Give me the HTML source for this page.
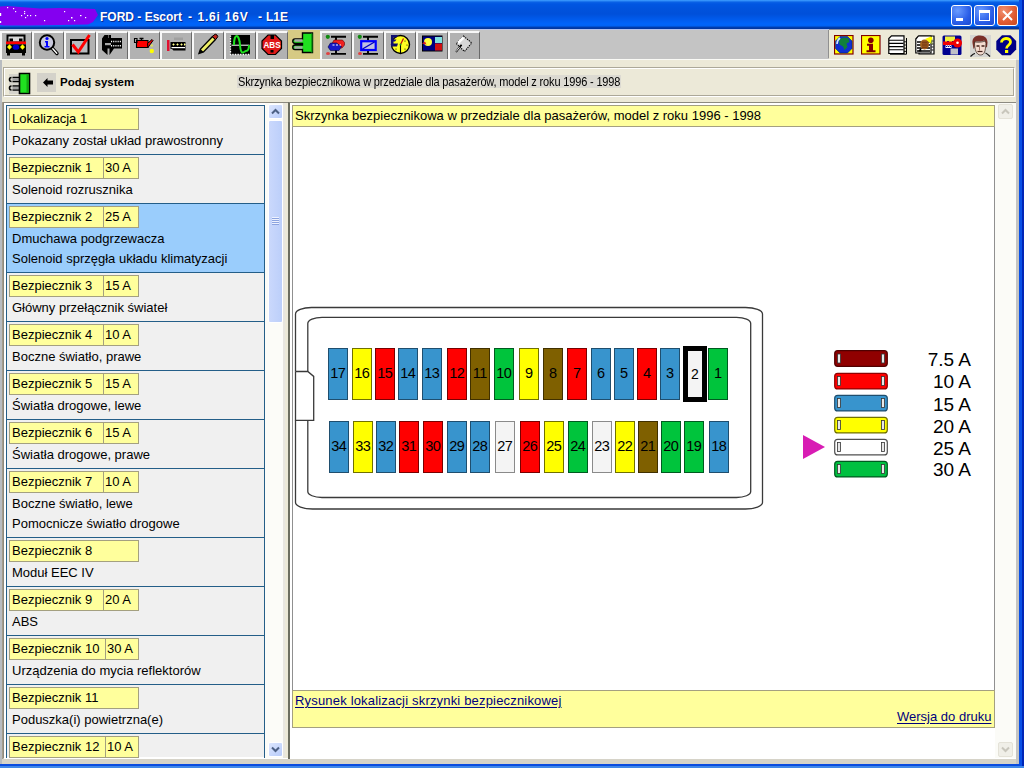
<!DOCTYPE html>
<html><head><meta charset="utf-8">
<style>
*{box-sizing:border-box}
html,body{margin:0;padding:0}
body{width:1024px;height:768px;position:relative;overflow:hidden;background:#ece9d8;font-family:"Liberation Sans",sans-serif;color:#000}
.a{position:absolute}
#title{left:0;top:0;width:1024px;height:29px;background:linear-gradient(#3d9cff 0px,#2a88f6 1px,#0a62e6 2px,#0056e2 4px,#0052dc 9px,#0050da 14px,#0058e8 18px,#0064fa 24px,#0062f2 26px,#0042ba 27px,#0036a0 28px)}
.tb{top:31px;width:32px;height:28px;background:#b2b2b2;border-top:2px solid #f8f8f8;border-left:2px solid #f8f8f8;border-right:1px solid #6a6a6a}
.row{position:absolute;left:7px;width:257px;background:#efeff1;border-top:1px solid #1a5c7e}
.yb{height:22px;background:#ffff9c;border:1px solid #a4a080}
.d{position:absolute;left:5px;font-size:13px;white-space:nowrap}
.tt{top:10px;font-size:12px;line-height:14px;font-weight:bold;color:#fff;text-shadow:1px 1px 0 #0a2a90;white-space:pre}
.t{font-size:13px;line-height:15px;white-space:nowrap}
.lk{color:#00007e;text-decoration:underline;text-underline-offset:1.5px}
.lg{right:53px;font-size:19px;line-height:22px;white-space:nowrap}
.fz{position:absolute;border:1px solid #2a4050;font-size:14.5px;text-align:center;line-height:49px;width:20px;height:52px;letter-spacing:-0.6px;text-indent:-0.6px}
</style></head><body>
<!-- title bar -->
<div id="title" class="a"></div>
<svg class="a" style="left:0;top:0" width="100" height="29"><path d="M0 6.5L8 6L20 7L40 8.5L60 8L80 8.5L95 9L98 15L93 22L88 24.5L60 25L30 25.5L4 25.5L0 25Z" fill="#8400f0" style="filter:blur(0.5px)"/>
<g fill="#fff"><rect x="7" y="7" width="1.2" height="1.2"/><rect x="13" y="8" width="1.2" height="1.2"/><rect x="15" y="11" width="1.2" height="1.2"/><rect x="24" y="11" width="1.2" height="1.2"/><rect x="24" y="13" width="1.2" height="1.2"/><rect x="21" y="15" width="1.2" height="1.2"/><rect x="27" y="15" width="1.2" height="1.2"/><rect x="30" y="15" width="1.2" height="1.2"/><rect x="35" y="15" width="1.2" height="1.2"/><rect x="25" y="17" width="1.2" height="1.2"/><rect x="44" y="20" width="1.2" height="1.2"/><rect x="64" y="11" width="1.2" height="1.2"/><rect x="71" y="17" width="1.5" height="1.5"/><rect x="68" y="20" width="1.2" height="1.2"/><rect x="74" y="20" width="1.2" height="1.2"/><rect x="80" y="15" width="1.5" height="1.2"/><rect x="85" y="17" width="1.2" height="1.2"/><rect x="0" y="13" width="1.2" height="3"/><rect x="0" y="21" width="1.2" height="2"/></g></svg>
<div class="a tt" style="left:100px">FORD - Escort</div>
<div class="a tt" style="left:188px">-</div>
<div class="a tt" style="left:197.5px;letter-spacing:0.8px">1.6i 16V</div>
<div class="a tt" style="left:258px">-</div>
<div class="a tt" style="left:266px">L1E</div>
<!-- title buttons -->
<div class="a" style="left:951px;top:5px;width:21px;height:21px;border:1px solid #fff;border-radius:3px;background:radial-gradient(circle at 30% 25%,#6a9cff,#2a5ee8 60%,#1a48d0)"><div class="a" style="left:4px;top:12px;width:7px;height:3px;background:#fff"></div></div>
<div class="a" style="left:974px;top:5px;width:21px;height:21px;border:1px solid #fff;border-radius:3px;background:radial-gradient(circle at 30% 25%,#6a9cff,#2a5ee8 60%,#1a48d0)"><div class="a" style="left:4px;top:4px;width:11px;height:11px;border:1px solid #fff;border-top-width:3px"></div></div>
<div class="a" style="left:997px;top:5px;width:21px;height:21px;border:1px solid #fff;border-radius:3px;background:radial-gradient(circle at 30% 25%,#f09070,#e05a30 60%,#c84a20)"><svg class="a" style="left:4px;top:4px" width="11" height="11"><path d="M1 1L10 10M10 1L1 10" stroke="#fff" stroke-width="2"/></svg></div>

<!-- window frame -->
<div class="a" style="left:1019px;top:0;width:3px;height:768px;background:#0a50e6"></div>
<div class="a" style="left:1022px;top:0;width:2px;height:768px;background:#0026b8"></div>
<div class="a" style="left:0;top:764px;width:1020px;height:2px;background:#0a4ce0"></div>
<div class="a" style="left:0;top:766px;width:1024px;height:2px;background:#4088e8"></div>
<div class="a" style="left:0;top:29px;width:2px;height:735px;background:#b8bcc0"></div>
<div class="a" style="left:1016px;top:60px;width:3px;height:704px;background:#c4c4c4"></div>
<div class="a" style="left:2px;top:759px;width:1014px;height:5px;background:#d6d3c8"></div>
<div class="a" style="left:0;top:29px;width:829px;height:1px;background:#b4c2ec"></div><div class="a" style="left:829px;top:29px;width:190px;height:1px;background:#8a8c94"></div>

<!-- toolbar 1 -->
<div class="a" style="left:0;top:30px;width:829px;height:29px;background:#c4c4c4"></div>
<div class="a" style="left:828px;top:30px;width:1px;height:28px;background:#909090"></div>
<div class="a tb" style="left:0px"></div>
<svg class="a" style="left:0px;top:31px" width="32" height="28">
<rect x="7.5" y="4.5" width="17" height="7" fill="#d8d8d8" stroke="#000" stroke-width="2"/>
<rect x="9.5" y="7.5" width="3.5" height="3" fill="#000"/><rect x="19" y="7.5" width="3.5" height="3" fill="#000"/>
<rect x="6" y="10.5" width="20" height="2.8" fill="#f00"/>
<rect x="6" y="13.3" width="20" height="8.7" fill="#000"/>
<path d="M9.5 13.3L12 16L9.5 18.7L7 16z" fill="#ff0"/><path d="M22.5 13.3L25 16L22.5 18.7L20 16z" fill="#ff0"/>
<ellipse cx="16" cy="16.2" rx="3.2" ry="2.6" fill="#0000d0"/>
<rect x="7" y="22" width="3" height="2.5" fill="#000"/><rect x="22" y="22" width="3" height="2.5" fill="#000"/>
</svg>
<div class="a tb" style="left:32px"></div>
<svg class="a" style="left:32px;top:31px" width="32" height="28">
<circle cx="15" cy="11.5" r="7.2" fill="#c8c8dc" stroke="#000" stroke-width="2"/>
<circle cx="15" cy="7.5" r="1.6" fill="#00f"/><path d="M13 10h3v5h1.5v1.5h-5V15h1.5v-3.5h-1z" fill="#00f"/>
<path d="M20.5 17.5l4.5 5" stroke="#000" stroke-width="3.4" stroke-linecap="round"/>
<path d="M20.8 17.8l4 4.5" stroke="#fff" stroke-width="1.4" stroke-linecap="round"/>
</svg>
<div class="a tb" style="left:64px"></div>
<svg class="a" style="left:64px;top:31px" width="32" height="28">
<rect x="7" y="9" width="17.5" height="13.5" fill="#b8bcc0" stroke="#000" stroke-width="2"/>
<path d="M8.5 13.5l5.8 7.5L25.5 4" fill="none" stroke="#f00" stroke-width="3"/>
</svg>
<div class="a tb" style="left:96px"></div>
<svg class="a" style="left:96px;top:31px" width="32" height="28">
<path d="M8.5 4H12V7H26V17.5H18L13.5 24V17.5H11.5V24L6 19V7.5z" fill="#000"/>
<rect x="12.5" y="4" width="2.5" height="3" fill="#000"/>
<rect x="9" y="12" width="6" height="2.2" fill="#a8a8a8"/>
<path d="M15 10.5h11M15 14.8h11" stroke="#fff" stroke-width="1.4" stroke-dasharray="1.1 1.1"/>
</svg>
<div class="a tb" style="left:128px"></div>
<svg class="a" style="left:128px;top:31px" width="32" height="28">
<path d="M8.5 9.5h11.5v7H8.5z" fill="#f00" stroke="#000" stroke-width="1.1"/>
<path d="M19.5 12.5l4.5-4 1 1-5 7z" fill="#f00" stroke="#000" stroke-width="1"/>
<path d="M6.5 7.5h2.5v4H6.5z" fill="none" stroke="#000" stroke-width="1.1"/>
<path d="M11.5 7.5h4M13.5 7.5v2" stroke="#000" stroke-width="1.3"/>
<circle cx="23.8" cy="14.5" r="1.3" fill="#dde060"/><circle cx="23.8" cy="20" r="2.2" fill="#ff0"/>
</svg>
<div class="a tb" style="left:160px"></div>
<svg class="a" style="left:160px;top:31px" width="32" height="28">
<rect x="7" y="9" width="2.5" height="11" fill="#e01030"/>
<path d="M10.5 11h15v8.5h-12l-1.5-1.5h-1.5z" fill="#000"/>
<path d="M12.5 13.5h2M13.5 12.5v2M16.5 13.5h2M17.5 12.5v2M20.5 13.5h2M21.5 12.5v2M24 13.5h1.5M24.5 12.5v2" stroke="#ff8" stroke-width="1.1"/>
<rect x="11.5" y="16" width="13.5" height="1.2" fill="#fff"/>
<rect x="14" y="6.5" width="9" height="2.5" fill="#a0a0a0"/>
</svg>
<div class="a tb" style="left:192px"></div>
<svg class="a" style="left:192px;top:31px" width="32" height="28">
<path d="M7 22.5l1.5-4.5 12-12.5 3 3-12 12.5z" fill="#ee6" stroke="#000" stroke-width="1.4"/>
<path d="M20.5 5.5l1.5-1.5a2 2 0 0 1 3 3l-1.5 1.5z" fill="#c02018" stroke="#000" stroke-width="1"/>
<path d="M7 22.5l1.5-4.5 3 3z" fill="#000"/>
</svg>
<div class="a tb" style="left:224px"></div>
<svg class="a" style="left:224px;top:31px" width="32" height="28">
<rect x="6.5" y="4" width="19.5" height="19.5" fill="#000"/>
<path d="M6.5 4.5v19h19.5" fill="none" stroke="#fff" stroke-width="1.3" stroke-dasharray="1.3 1.3"/>
<path d="M7.5 14.2h18" stroke="#fff" stroke-width="1"/>
<path d="M10 14c0-12 5-12 6 0s4 6 6 6 3-3 3-6" fill="none" stroke="#1ee01e" stroke-width="2"/>
</svg>
<div class="a tb" style="left:256px"></div>
<svg class="a" style="left:256px;top:31px" width="32" height="28">
<path d="M12 4h7.5l6 6v7.5l-6 6H12l-6-6V10z" fill="#e01818" stroke="#000" stroke-width="1.2"/>
<rect x="14.5" y="4" width="3.5" height="4" fill="#000"/><rect x="14.5" y="19" width="3" height="2.5" fill="#000"/>
<text x="16" y="16.8" font-family="Liberation Sans" font-weight="bold" font-size="8.8" fill="#fff" text-anchor="middle" textLength="17" lengthAdjust="spacingAndGlyphs">ABS</text>
</svg>
<div class="a" style="left:288px;top:30px;width:32px;height:30px;background:#d6ca84"></div>
<svg class="a" style="left:288px;top:31px" width="32" height="28">
<path d="M14.5 2h10v19.5h-10V18.5H7a1.5 1.5 0 0 1 0-4.5h7.5v-1.5H7a1.5 1.5 0 0 1 0-4.5h7.5z" fill="#20e020" stroke="#000" stroke-width="1.4"/>
<path d="M6.5 9.5h8M6.5 16.5h8" stroke="#a8a8a8" stroke-width="2.5"/>
<rect x="23" y="2.5" width="1.5" height="19" fill="#10a010"/>
</svg>
<div class="a tb" style="left:320px"></div>
<svg class="a" style="left:320px;top:31px" width="32" height="28">
<circle cx="7.8" cy="5.8" r="2.1" fill="#108a10"/>
<path d="M11 5.7h15M16 5.7v3.5M11 22.9h15M16 19v4" stroke="#000" stroke-width="1.9"/>
<path d="M11.5 13.5L14 9H22.5L24.5 11.5V14L22 17H14z" fill="#f02020" stroke="#600" stroke-width="0.6"/>
<path d="M8 16L10.5 12H16.5L21.5 15.5L19 19.5H10.5z" fill="#1818c8" stroke="#000040" stroke-width="0.6"/>
<path d="M12.5 14h2M16 14h2M19.5 14h1.5" stroke="#fff" stroke-width="1"/>
<ellipse cx="8" cy="22.5" rx="2" ry="1.5" fill="#e04040"/>
</svg>
<div class="a tb" style="left:352px"></div>
<svg class="a" style="left:352px;top:31px" width="32" height="28">
<circle cx="7.8" cy="5.8" r="2.1" fill="#108a10"/>
<path d="M11 5.7h15M16 5.7v3.5M11 22.9h15M16 19.5v3.5" stroke="#000" stroke-width="1.9"/>
<rect x="9.2" y="10.2" width="14.5" height="8.8" fill="#c0c0e0" stroke="#0000ff" stroke-width="2.2"/>
<path d="M10.5 18L22.5 11" stroke="#0000c0" stroke-width="1.4"/>
<ellipse cx="8" cy="22.5" rx="2" ry="1.5" fill="#e04040"/>
</svg>
<div class="a tb" style="left:384px"></div>
<svg class="a" style="left:384px;top:31px" width="32" height="28">
<circle cx="16.5" cy="13.5" r="9" fill="#ffff20" stroke="#000" stroke-width="1.4"/>
<path d="M7 4h7l-1.5 2.5H9.5v2h3L11 10.5H9.5v2h4.5l-1 3H7z" fill="#101070"/>
<path d="M16.5 13.5l3-6" stroke="#c01010" stroke-width="1.3"/>
<path d="M16.5 13.5v9" stroke="#000" stroke-width="1.1"/>
<circle cx="16.5" cy="13.5" r="1" fill="#20a020"/>
<g fill="#000"><circle cx="21" cy="10" r="0.6"/><circle cx="23" cy="14" r="0.6"/><circle cx="21" cy="18" r="0.6"/><circle cx="12" cy="18" r="0.6"/><circle cx="11" cy="14" r="0.6"/></g>
</svg>
<div class="a tb" style="left:416px"></div>
<svg class="a" style="left:416px;top:31px" width="32" height="28">
<rect x="6.5" y="5" width="19.5" height="15" fill="#000080" stroke="#000" stroke-width="1"/>
<rect x="19" y="6" width="7" height="6" fill="#80e0e0"/>
<rect x="19" y="12.5" width="7" height="7" fill="#d01010"/>
<circle cx="12" cy="11" r="4" fill="#ffff40"/><path d="M6 12.5l3-2 1.5 3z" fill="#e02020"/>
</svg>
<div class="a tb" style="left:448px"></div>
<svg class="a" style="left:448px;top:31px" width="32" height="28">
<path d="M15.5 5l8.3 7-7.3 8.5-8.2-8z" fill="#d8d8d8" stroke="#000" stroke-width="1.1" stroke-dasharray="1.3 1"/>
<path d="M10 12l5.5-5.5" stroke="#fff" stroke-width="2.5"/>
<circle cx="13" cy="14.5" r="1.1" fill="#000"/>
<path d="M12.5 15l-4.5 6" stroke="#000" stroke-width="1.8"/>
<path d="M11.5 16.2l-3.5 4.5" stroke="#fff" stroke-width="0.9"/>
</svg>
<div class="a" style="left:829px;top:30px;width:190px;height:29px;background:#ece9d8"></div>
<svg class="a" style="left:834px;top:35px" width="21" height="22">
<rect x="0.5" y="0.5" width="18.5" height="18.5" fill="#ffff00" stroke="#800000" stroke-width="1.2"/>
<path d="M6 1.5h7.5l4.5 4.5v7.5l-4.5 4.5H6l-4.5-4.5V6z" fill="#1030d0" stroke="#002080" stroke-width="0.6"/>
<path d="M5 5c2-2.5 6-3.5 9.5-1.5l1 3.5-3 1.5 1 3.5-3 3-1.5-3.5-3.5-2z" fill="#10803a"/>
<path d="M3 9c0-2.5 1-4.5 3-6" stroke="#d0e8ff" stroke-width="1.6" fill="none"/>
</svg>
<svg class="a" style="left:861px;top:35px" width="21" height="22">
<rect x="0.5" y="0.5" width="18.5" height="18.5" fill="#ffff00" stroke="#800000" stroke-width="1.2"/>
<circle cx="9.8" cy="5.2" r="2.8" fill="#800000"/>
<path d="M6 8.8h6v6.5h2.5v2H5.5v-2H8v-4.5H6z" fill="#800000"/>
</svg>
<svg class="a" style="left:888px;top:35px" width="21" height="22">
<path d="M3.5 0.8H16V18.5H0.8V3.5z" fill="#fff" stroke="#000" stroke-width="1.2"/>
<path d="M2 19.2H18.5V3" fill="none" stroke="#000" stroke-width="1"/>
<path d="M1 5.2h14.5M1 8.4h14.5M1 11.6h14.5M1 14.8h14.5" stroke="#000" stroke-width="1.1"/>
<path d="M16 6.8h2.5M16 10h2.5M16 13.2h2.5M16 16.4h2.5" stroke="#000" stroke-width="0.9"/>
</svg>
<svg class="a" style="left:915px;top:35px" width="21" height="22">
<path d="M4 1h15v18H4z" fill="#fff" stroke="#000" stroke-width="1.2"/>
<path d="M0.8 4l2.5-3H16v17H0.8z" fill="#fff" stroke="#000" stroke-width="1.2"/>
<path d="M2 7h13M2 10h13M2 13h13M2 16h13" stroke="#000" stroke-width="1.3"/>
<path d="M16.5 6h2M16.5 9h2M16.5 12h2M16.5 15h2" stroke="#000" stroke-width="1"/>
<path d="M10 4l6-2.5 1.5 1.5-2 5.5z" fill="#ffff00"/>
<path d="M15.5 8.5l2-5v6z" fill="#809040"/>
<ellipse cx="9.5" cy="9.5" rx="4.5" ry="5" fill="#a06020"/>
<path d="M7 7.5h5M7 10h5M7 12.5h5M8 6v7M10 6v7M12 6v7" stroke="#703010" stroke-width="0.6"/>
<path d="M6 13l-2.5 2.5v1h3z" fill="#000"/>
</svg>
<svg class="a" style="left:942px;top:35px" width="21" height="22">
<rect x="0.5" y="0.5" width="19" height="19.5" fill="#000090" rx="1.5"/>
<rect x="3" y="1.5" width="10" height="4.5" fill="#f0f040"/>
<path d="M3 6h2v2h2v-2h3v2h-1v1h-6z" fill="#f0f040"/>
<rect x="8.5" y="13.5" width="7.5" height="6" fill="#c0c0c8"/><rect x="4.5" y="13.5" width="3" height="5.5" fill="#000090"/>
<circle cx="15.5" cy="8" r="4.5" fill="#f00000"/><circle cx="15.5" cy="7.8" r="1.3" fill="#fff"/>
<rect x="1" y="6.5" width="12" height="3.5" fill="#f00000"/>
<path d="M3.5 11.5l1-1.5 1 1.5 1-1.5 1 1.5 1-1.5 1 1.5" stroke="#fff" stroke-width="1" fill="none"/>
<rect x="3.5" y="12" width="6" height="1" fill="#fff"/>
</svg>
<svg class="a" style="left:970px;top:35px" width="21" height="22">
<rect x="0" y="0" width="21" height="22" fill="#d6d6d2"/>
<path d="M2.5 8C2 3 5 0.5 10 0.5s7.5 3 7.5 7l-0.5 5-1.5-1-1-6c-2 1-5 1-9 1l-1 6-1 1.5z" fill="#7a3028"/>
<path d="M4.5 7c0 8 2 13 6 13s5-4 5.5-12l-1-2c-2 1-6 1.5-10 1z" fill="#f4dcd0" stroke="#302018" stroke-width="0.7"/>
<path d="M6.5 11h3M11.5 11h3" stroke="#402018" stroke-width="1.3"/>
<path d="M9.5 11.5v4" stroke="#906050" stroke-width="0.8"/>
<path d="M7.5 16.5h5" stroke="#402018" stroke-width="1.2"/>
<path d="M0.5 21.5c1.5-1.5 3-3 4.5-3M20 21.5c-1.5-1.5-3-3-4.5-3.5" stroke="#101010" stroke-width="1.2" fill="none"/>
</svg>
<svg class="a" style="left:996px;top:35px" width="21" height="22">
<path d="M6 0.3h8.5l5.7 5.7v8.5l-5.7 5.7H6L0.3 14.5V6z" fill="#000088"/>
<path d="M5.5 7.5c0-5 9-5.5 9-0.5 0 3.5-4 3-4 6.5" fill="none" stroke="#ffff00" stroke-width="2.8"/>
<rect x="9" y="15" width="3.2" height="3" fill="#ffff00"/>
</svg>
<div class="a" style="left:0;top:59px;width:1016px;height:1px;background:#fafaf6"></div>

<!-- row 2 -->
<div class="a" style="left:3px;top:67px;width:1012px;height:30px;border-top:1px solid #aca899;border-left:1px solid #aca899;border-bottom:1px solid #fff;border-right:1px solid #fff"></div>
<div class="a" style="left:4px;top:68px;width:1010px;height:28px;border-top:1px solid #fff;border-left:1px solid #fff;border-bottom:1px solid #aca899;border-right:1px solid #aca899"></div>
<svg class="a" style="left:8px;top:72px" width="24" height="24"><rect x="1" y="2" width="10" height="20" fill="#d6d4cc"/><path d="M4.5 5.5h7M4.5 9.5h7M4.5 14h7M4.5 18h7" stroke="#000" stroke-width="1.6"/><path d="M4.5 7.5h7M4.5 16h7" stroke="#a0a0a0" stroke-width="2.6"/><path d="M3.5 5.5a2 2 0 0 0 0 4M3.5 14a2 2 0 0 0 0 4" stroke="#000" stroke-width="1.6" fill="none"/><path d="M11.5 1.5h10v20h-10z" fill="#20e020" stroke="#000" stroke-width="1.6"/><rect x="18.5" y="2.3" width="2" height="18.5" fill="#10a810"/></svg>
<div class="a" style="left:37px;top:73px;width:19px;height:19px;background:#d4d2ca"></div>
<svg class="a" style="left:43px;top:78px" width="11" height="9"><path d="M0 4.5L4.5 0V2.5H10V6.5H4.5V9Z" fill="#000"/></svg>
<div class="a" style="left:60px;top:75px;font-size:11.5px;line-height:14px;font-weight:bold;white-space:nowrap">Podaj system</div>
<div class="a" style="left:237px;top:75px;width:384px;height:13px;background:#dcdad2"></div>
<div class="a" style="left:238px;top:75px;font-size:11px;white-space:nowrap;letter-spacing:-0.16px;transform:scaleY(1.12);transform-origin:0 0">Skrzynka bezpiecznikowa w przedziale dla pasażerów, model z roku 1996 - 1998</div>

<!-- left frame -->
<div class="a" style="left:3px;top:102px;width:286px;height:657px;border-top:1px solid #8c8a80;border-left:1px solid #8c8a80;border-bottom:1px solid #fff"></div>
<div class="a" style="left:4px;top:103px;width:284px;height:655px;background:#fff"></div>
<div class="a" style="left:2px;top:102px;width:1px;height:657px;background:#a49c8c"></div><div class="a" style="left:6px;top:105px;width:259px;height:653px;border:1px solid #245e88;border-bottom:none"></div>
<div class="a" style="left:7px;top:106px;width:257px;height:48px;background:#f0f0f0"></div>
<div class="a yb" style="left:9px;top:108px;width:130px"></div>
<div class="a t" style="left:12px;top:111px">Lokalizacja 1</div>
<div class="a t" style="left:12px;top:133px">Pokazany został układ prawostronny</div>
<div class="a" style="left:7px;top:154px;width:257px;height:1px;background:#245e88"></div>
<div class="a" style="left:7px;top:155px;width:257px;height:48px;background:#f0f0f0"></div>
<div class="a yb" style="left:9px;top:157px;width:130px"></div>
<div class="a" style="left:103px;top:157px;width:1px;height:22px;background:#a4a080"></div>
<div class="a t" style="left:12px;top:160px">Bezpiecznik 1</div>
<div class="a t" style="left:105px;top:160px">30 A</div>
<div class="a t" style="left:12px;top:182px">Solenoid rozrusznika</div>
<div class="a" style="left:7px;top:203px;width:257px;height:1px;background:#245e88"></div>
<div class="a" style="left:7px;top:204px;width:257px;height:68px;background:#9acdfc"></div>
<div class="a yb" style="left:9px;top:206px;width:130px"></div>
<div class="a" style="left:103px;top:206px;width:1px;height:22px;background:#a4a080"></div>
<div class="a t" style="left:12px;top:209px">Bezpiecznik 2</div>
<div class="a t" style="left:105px;top:209px">25 A</div>
<div class="a t" style="left:12px;top:231px">Dmuchawa podgrzewacza</div>
<div class="a t" style="left:12px;top:251px">Solenoid sprzęgła układu klimatyzacji</div>
<div class="a" style="left:7px;top:272px;width:257px;height:1px;background:#245e88"></div>
<div class="a" style="left:7px;top:273px;width:257px;height:48px;background:#f0f0f0"></div>
<div class="a yb" style="left:9px;top:275px;width:130px"></div>
<div class="a" style="left:103px;top:275px;width:1px;height:22px;background:#a4a080"></div>
<div class="a t" style="left:12px;top:278px">Bezpiecznik 3</div>
<div class="a t" style="left:105px;top:278px">15 A</div>
<div class="a t" style="left:12px;top:300px">Główny przełącznik świateł</div>
<div class="a" style="left:7px;top:321px;width:257px;height:1px;background:#245e88"></div>
<div class="a" style="left:7px;top:322px;width:257px;height:48px;background:#f0f0f0"></div>
<div class="a yb" style="left:9px;top:324px;width:130px"></div>
<div class="a" style="left:103px;top:324px;width:1px;height:22px;background:#a4a080"></div>
<div class="a t" style="left:12px;top:327px">Bezpiecznik 4</div>
<div class="a t" style="left:105px;top:327px">10 A</div>
<div class="a t" style="left:12px;top:349px">Boczne światło, prawe</div>
<div class="a" style="left:7px;top:370px;width:257px;height:1px;background:#245e88"></div>
<div class="a" style="left:7px;top:371px;width:257px;height:48px;background:#f0f0f0"></div>
<div class="a yb" style="left:9px;top:373px;width:130px"></div>
<div class="a" style="left:103px;top:373px;width:1px;height:22px;background:#a4a080"></div>
<div class="a t" style="left:12px;top:376px">Bezpiecznik 5</div>
<div class="a t" style="left:105px;top:376px">15 A</div>
<div class="a t" style="left:12px;top:398px">Światła drogowe, lewe</div>
<div class="a" style="left:7px;top:419px;width:257px;height:1px;background:#245e88"></div>
<div class="a" style="left:7px;top:420px;width:257px;height:48px;background:#f0f0f0"></div>
<div class="a yb" style="left:9px;top:422px;width:130px"></div>
<div class="a" style="left:103px;top:422px;width:1px;height:22px;background:#a4a080"></div>
<div class="a t" style="left:12px;top:425px">Bezpiecznik 6</div>
<div class="a t" style="left:105px;top:425px">15 A</div>
<div class="a t" style="left:12px;top:447px">Światła drogowe, prawe</div>
<div class="a" style="left:7px;top:468px;width:257px;height:1px;background:#245e88"></div>
<div class="a" style="left:7px;top:469px;width:257px;height:68px;background:#f0f0f0"></div>
<div class="a yb" style="left:9px;top:471px;width:130px"></div>
<div class="a" style="left:103px;top:471px;width:1px;height:22px;background:#a4a080"></div>
<div class="a t" style="left:12px;top:474px">Bezpiecznik 7</div>
<div class="a t" style="left:105px;top:474px">10 A</div>
<div class="a t" style="left:12px;top:496px">Boczne światło, lewe</div>
<div class="a t" style="left:12px;top:516px">Pomocnicze światło drogowe</div>
<div class="a" style="left:7px;top:537px;width:257px;height:1px;background:#245e88"></div>
<div class="a" style="left:7px;top:538px;width:257px;height:48px;background:#f0f0f0"></div>
<div class="a yb" style="left:9px;top:540px;width:130px"></div>
<div class="a t" style="left:12px;top:543px">Bezpiecznik 8</div>
<div class="a t" style="left:12px;top:565px">Moduł EEC IV</div>
<div class="a" style="left:7px;top:586px;width:257px;height:1px;background:#245e88"></div>
<div class="a" style="left:7px;top:587px;width:257px;height:48px;background:#f0f0f0"></div>
<div class="a yb" style="left:9px;top:589px;width:130px"></div>
<div class="a" style="left:103px;top:589px;width:1px;height:22px;background:#a4a080"></div>
<div class="a t" style="left:12px;top:592px">Bezpiecznik 9</div>
<div class="a t" style="left:105px;top:592px">20 A</div>
<div class="a t" style="left:12px;top:614px">ABS</div>
<div class="a" style="left:7px;top:635px;width:257px;height:1px;background:#245e88"></div>
<div class="a" style="left:7px;top:636px;width:257px;height:48px;background:#f0f0f0"></div>
<div class="a yb" style="left:9px;top:638px;width:130px"></div>
<div class="a" style="left:105px;top:638px;width:1px;height:22px;background:#a4a080"></div>
<div class="a t" style="left:12px;top:641px">Bezpiecznik 10</div>
<div class="a t" style="left:107px;top:641px">30 A</div>
<div class="a t" style="left:12px;top:663px">Urządzenia do mycia reflektorów</div>
<div class="a" style="left:7px;top:684px;width:257px;height:1px;background:#245e88"></div>
<div class="a" style="left:7px;top:685px;width:257px;height:48px;background:#f0f0f0"></div>
<div class="a yb" style="left:9px;top:687px;width:130px"></div>
<div class="a t" style="left:12px;top:690px">Bezpiecznik 11</div>
<div class="a t" style="left:12px;top:712px">Poduszka(i) powietrzna(e)</div>
<div class="a" style="left:7px;top:733px;width:257px;height:1px;background:#245e88"></div>
<div class="a" style="left:7px;top:734px;width:257px;height:23px;background:#f0f0f0"></div>
<div class="a yb" style="left:9px;top:736px;width:130px"></div>
<div class="a" style="left:105px;top:736px;width:1px;height:22px;background:#a4a080"></div>
<div class="a t" style="left:12px;top:739px">Bezpiecznik 12</div>
<div class="a t" style="left:107px;top:739px">10 A</div>
<!-- left scrollbar -->
<div class="a" style="left:265px;top:103px;width:19px;height:655px;background:#fcfcf8"></div>
<div class="a" style="left:283px;top:103px;width:2px;height:655px;background:#e8e6e0"></div><div class="a" style="left:285px;top:103px;width:3px;height:655px;background:#ece9d8"></div>
<div class="a" style="left:268px;top:104px;width:15px;height:15px;border-radius:2px;background:linear-gradient(135deg,#dce6fe,#b8ccfa);border:1px solid #fff"></div>
<svg class="a" style="left:271px;top:108px" width="9" height="7"><path d="M1 5.5L4.5 2L8 5.5" stroke="#4d6185" stroke-width="2" fill="none"/></svg>
<div class="a" style="left:268px;top:120px;width:15px;height:203px;border-radius:2px;background:linear-gradient(90deg,#cad8fc,#bccffa);border:1px solid #fff"></div>
<div class="a" style="left:272px;top:217px;width:7px;height:8px;background:repeating-linear-gradient(#eef2fe 0 1px,#8ca4e0 1px 2px)"></div>
<div class="a" style="left:268px;top:742px;width:15px;height:15px;border-radius:2px;background:linear-gradient(135deg,#dce6fe,#b8ccfa);border:1px solid #fff"></div>
<svg class="a" style="left:271px;top:746px" width="9" height="7"><path d="M1 1.5L4.5 5L8 1.5" stroke="#4d6185" stroke-width="2" fill="none"/></svg>

<!-- main frame -->
<div class="a" style="left:288px;top:102px;width:728px;height:657px;border-top:1px solid #8c8a80;border-left:2px solid #6c6e60"></div>
<div class="a" style="left:290px;top:103px;width:726px;height:656px;background:#fff"></div>
<div class="a" style="left:292px;top:105px;width:703px;height:623px;border-left:1px solid #909090;border-right:1px solid #909090;background:#fff"></div>
<div class="a" style="left:292px;top:105px;width:703px;height:22px;background:#ffff9c;border:1px solid #a4a080"></div>
<div class="a t" style="left:295px;top:108px">Skrzynka bezpiecznikowa w przedziale dla pasażerów, model z roku 1996 - 1998</div>
<div class="a" style="left:292px;top:690px;width:703px;height:38px;background:#ffff9c;border:1px solid #a4a080"></div>
<div class="a t lk" style="left:295px;top:693px;letter-spacing:0.18px">Rysunek lokalizacji skrzynki bezpiecznikowej</div>
<div class="a t lk" style="left:897px;top:709px">Wersja do druku</div>
<!-- right scrollbar -->
<div class="a" style="left:995px;top:103px;width:21px;height:655px;background:#fbfbf7"></div>
<div class="a" style="left:998px;top:104px;width:15px;height:15px;border-radius:2px;background:#f0efe8;border:1px solid #e4e2d8"></div>
<svg class="a" style="left:1001px;top:108px" width="9" height="7"><path d="M1 5.5L4.5 2L8 5.5" stroke="#c8c6bc" stroke-width="2" fill="none"/></svg>
<div class="a" style="left:998px;top:742px;width:15px;height:15px;border-radius:2px;background:#f0efe8;border:1px solid #e4e2d8"></div>
<svg class="a" style="left:1001px;top:746px" width="9" height="7"><path d="M1 1.5L4.5 5L8 1.5" stroke="#c8c6bc" stroke-width="2" fill="none"/></svg>
<!-- diagram -->
<svg class="a" style="left:0;top:0" width="1024" height="768">
<g fill="none" stroke="#3a3a3a" stroke-width="1.3">
<path d="M295.5 371.5V314A16 6.5 0 0 1 311.5 307.5H745.5A17 6.5 0 0 1 762.5 314V502.5A17 6.5 0 0 1 745.5 509H312.5A17 6.5 0 0 1 295.5 502.5V420.5"/>
<path d="M307.8 371.5V323.4A14.2 6 0 0 1 322 317.4H736.5A14.2 6 0 0 1 750.7 323.4V491.5A14.2 6 0 0 1 736.5 497.5H322A14.2 6 0 0 1 307.8 491.5V420.5"/>
<path d="M295.5 371.5H307.8L313.7 376.4V420.3H295.5V371.5"/>
</g>
</svg>
<div class="a fz" style="left:328px;top:348px;background:#3894cd;border-color:#1f4e6e">17</div>
<div class="a fz" style="left:352px;top:348px;background:#ffff00;border-color:#707000">16</div>
<div class="a fz" style="left:375px;top:348px;background:#ff0000;border-color:#780000">15</div>
<div class="a fz" style="left:398px;top:348px;background:#3894cd;border-color:#1f4e6e">14</div>
<div class="a fz" style="left:422px;top:348px;background:#3894cd;border-color:#1f4e6e">13</div>
<div class="a fz" style="left:447px;top:348px;background:#ff0000;border-color:#780000">12</div>
<div class="a fz" style="left:470px;top:348px;background:#7f6000;border-color:#403000">11</div>
<div class="a fz" style="left:494px;top:348px;background:#00c43c;border-color:#005a20">10</div>
<div class="a fz" style="left:519px;top:348px;background:#ffff00;border-color:#707000">9</div>
<div class="a fz" style="left:543px;top:348px;background:#7f6000;border-color:#403000">8</div>
<div class="a fz" style="left:567px;top:348px;background:#ff0000;border-color:#780000">7</div>
<div class="a fz" style="left:591px;top:348px;background:#3894cd;border-color:#1f4e6e">6</div>
<div class="a fz" style="left:614px;top:348px;background:#3894cd;border-color:#1f4e6e">5</div>
<div class="a fz" style="left:637px;top:348px;background:#ff0000;border-color:#780000">4</div>
<div class="a fz" style="left:660px;top:348px;background:#3894cd;border-color:#1f4e6e">3</div>
<div class="a fz" style="left:686px;top:348px;background:#f4f4f4;border-color:#8a8a8a">2</div>
<div class="a fz" style="left:708px;top:348px;background:#00c43c;border-color:#005a20">1</div>
<div class="a fz" style="left:329px;top:421px;background:#3894cd;border-color:#1f4e6e">34</div>
<div class="a fz" style="left:353px;top:421px;background:#ffff00;border-color:#707000">33</div>
<div class="a fz" style="left:376px;top:421px;background:#3894cd;border-color:#1f4e6e">32</div>
<div class="a fz" style="left:399px;top:421px;background:#ff0000;border-color:#780000">31</div>
<div class="a fz" style="left:423px;top:421px;background:#ff0000;border-color:#780000">30</div>
<div class="a fz" style="left:447px;top:421px;background:#3894cd;border-color:#1f4e6e">29</div>
<div class="a fz" style="left:470px;top:421px;background:#3894cd;border-color:#1f4e6e">28</div>
<div class="a fz" style="left:495px;top:421px;background:#f4f4f4;border-color:#8a8a8a">27</div>
<div class="a fz" style="left:520px;top:421px;background:#ff0000;border-color:#780000">26</div>
<div class="a fz" style="left:544px;top:421px;background:#ffff00;border-color:#707000">25</div>
<div class="a fz" style="left:568px;top:421px;background:#00c43c;border-color:#005a20">24</div>
<div class="a fz" style="left:592px;top:421px;background:#f4f4f4;border-color:#8a8a8a">23</div>
<div class="a fz" style="left:615px;top:421px;background:#ffff00;border-color:#707000">22</div>
<div class="a fz" style="left:638px;top:421px;background:#7f6000;border-color:#403000">21</div>
<div class="a fz" style="left:661px;top:421px;background:#00c43c;border-color:#005a20">20</div>
<div class="a fz" style="left:684px;top:421px;background:#00c43c;border-color:#005a20">19</div>
<div class="a fz" style="left:709px;top:421px;background:#3894cd;border-color:#1f4e6e">18</div>
<div class="a" style="left:683px;top:346px;width:24px;height:56px;border:5px solid #000;background:#f4f4f4"></div>
<div class="a" style="left:683px;top:346px;width:24px;height:56px;font-size:14px;line-height:56px;text-align:center">2</div>
<!-- legend -->
<svg class="a" style="left:800px;top:340px" width="200" height="150">
<g stroke-width="1.2">
<rect x="34.7" y="10.7" width="52.6" height="15.6" rx="3" fill="#900000" stroke="#500000"/>
<rect x="34.7" y="33.3" width="52.6" height="15.6" rx="3" fill="#ff0000" stroke="#900000"/>
<rect x="34.7" y="55.3" width="52.6" height="15.6" rx="3" fill="#3894cd" stroke="#1f4e6e"/>
<rect x="34.7" y="77.3" width="52.6" height="15.6" rx="3" fill="#ffff00" stroke="#707000"/>
<rect x="34.7" y="99.3" width="52.6" height="15.6" rx="3" fill="#ffffff" stroke="#505050"/>
<rect x="34.7" y="121.3" width="52.6" height="15.6" rx="3" fill="#00c040" stroke="#005a20"/>
</g>
<g fill="#e8e8e8" stroke="#333" stroke-width="0.8">
<rect x="37.5" y="14" width="3" height="9"/><rect x="81.5" y="14" width="3" height="9"/>
<rect x="37.5" y="36.5" width="3" height="9"/><rect x="81.5" y="36.5" width="3" height="9"/>
<rect x="37.5" y="58.5" width="3" height="9"/><rect x="81.5" y="58.5" width="3" height="9"/>
<rect x="37.5" y="80.5" width="3" height="9"/><rect x="81.5" y="80.5" width="3" height="9"/>
<rect x="37.5" y="102.5" width="3" height="9"/><rect x="81.5" y="102.5" width="3" height="9"/>
<rect x="37.5" y="124.5" width="3" height="9"/><rect x="81.5" y="124.5" width="3" height="9"/>
</g>
<path d="M3 95L25 107L3 119Z" fill="#d81cb4"/>
</svg>
<div class="a lg" style="top:349px">7.5 A</div>
<div class="a lg" style="top:371px">10 A</div>
<div class="a lg" style="top:394px">15 A</div>
<div class="a lg" style="top:416px">20 A</div>
<div class="a lg" style="top:438px">25 A</div>
<div class="a lg" style="top:459px">30 A</div>

</body></html>
